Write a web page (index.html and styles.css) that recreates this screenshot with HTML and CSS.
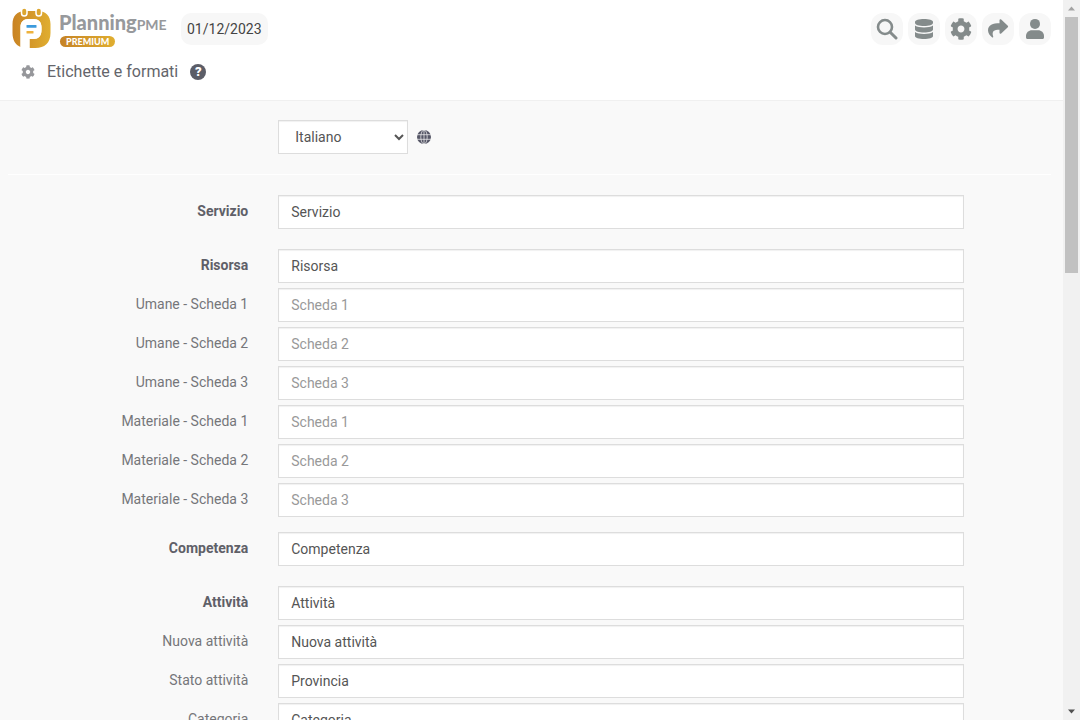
FILE: index.html
```html
<!DOCTYPE html>
<html lang="it">
<head>
<meta charset="utf-8">
<meta name="viewport" content="width=device-width, initial-scale=1">
<title>PlanningPME - Etichette e formati</title>
<link rel="stylesheet" href="styles.css">
</head>
<body>
<div class="page">
  <header class="header">
    <div class="topbar">
      <a class="logo" href="#" aria-label="PlanningPME Premium">
        <svg class="logo-mark" viewBox="0 0 38 41" aria-hidden="true">
          <defs><linearGradient id="gold" x1="0" y1="0" x2="1" y2="0"><stop offset="0" stop-color="#c98324"/><stop offset="1" stop-color="#e0ae30"/></linearGradient></defs>
          <path fill="url(#gold)" d="M12 3H26C33 3 38 8 38 16V25C38 35 32 40 23 40H17V31H21C26 31 29 28 29 22V19C29 14 26 11 21 11H16C11 11 8 14 8 19V39C3 37 0 32 0 25V16C0 8 5 3 12 3Z"/>
          <path fill="#fff" d="M8 39V19C8 14 11 11 16 11H21C26 11 29 14 29 19V22C29 28 26 31 21 31H17V40H12Z"/>
          <g fill="#dca62f" stroke="#fff" stroke-width="1.500"><rect x="9" y="0" width="5.500" height="8" rx="2.750"/><rect x="23.500" y="0" width="5.500" height="8" rx="2.750"/></g>
          <rect x="14" y="17" width="10" height="2.800" rx=".6" fill="#3d9bdc"/>
          <rect x="14" y="23" width="7" height="2.600" rx=".6" fill="#eeb23c"/>
        </svg>
        <span class="logo-text">
          <span class="logo-name">Planning<span class="logo-suffix">PME</span></span>
          <span class="logo-badge">PREMIUM</span>
        </span>
      </a>
      <button class="date" type="button">01/12/2023</button>
      <nav class="tools" aria-label="Strumenti">
        <button class="tool" type="button" aria-label="Cerca"><svg viewBox="0 0 22 22"><circle cx="9" cy="9" r="7" fill="none" stroke="currentColor" stroke-width="2.600"/><path d="M14.200 14.200L20 20" stroke="currentColor" stroke-width="3" stroke-linecap="round"/></svg></button>
        <button class="tool" type="button" aria-label="Dati"><svg viewBox="0 0 22 22" fill="currentColor"><path d="M2 4C2 2.200 6 1 11 1S20 2.200 20 4V5C20 6.700 16 8 11 8S2 6.700 2 5Z"/><path d="M2 7.600C4 9 7.500 9.500 11 9.500S18 9 20 7.600V11.500C20 13.200 16 14.500 11 14.500S2 13.200 2 11.500Z"/><path d="M2 14.100C4 15.500 7.500 16 11 16S18 15.500 20 14.100V18C20 19.800 16 21 11 21S2 19.800 2 18Z"/></svg></button>
        <button class="tool" type="button" aria-label="Impostazioni"><svg viewBox="0 0 512 512"><use href="#gear"/></svg></button>
        <button class="tool" type="button" aria-label="Condividi"><svg viewBox="0 0 22 22" fill="currentColor"><path d="M12.500 2.200C12.500 1.300 13.500 1 14.200 1.600L20.800 7.800C21.300 8.300 21.300 8.800 20.800 9.300L14.200 15.400C13.500 16 12.500 15.700 12.500 14.800V11.700C7 11.700 4.500 13 6.200 18.600C6.400 19.400 5.700 19.900 5 19.300C2.800 17.600 1 15.200 1 12.300C1 6.700 6 5.300 12.500 5.200Z"/></svg></button>
        <button class="tool" type="button" aria-label="Utente"><svg viewBox="0 0 22 22" fill="currentColor"><circle cx="11" cy="5.900" r="5"/><path d="M2 19.500V18C2 14.600 4.600 12.300 8 12.300H14C17.400 12.300 20 14.600 20 18V19.500C20 20.400 19.400 21 18.500 21H3.500C2.600 21 2 20.400 2 19.500Z"/></svg></button>
      </nav>
    </div>
    <div class="titlebar">
      <svg class="title-gear" viewBox="0 0 512 512" aria-hidden="true"><path id="gear" fill="currentColor" d="M487.400 315.700l-42.600-24.600c4.300-23.200 4.300-47 0-70.200l42.600-24.600c4.900-2.800 7.100-8.600 5.500-14-11.100-35.600-30-67.800-54.700-94.600-3.800-4.100-10-5.100-14.800-2.300L380.800 110c-17.900-15.400-38.500-27.300-60.800-35.100V25.800c0-5.600-3.900-10.500-9.400-11.700-36.700-8.200-74.300-7.800-109.200 0-5.500 1.200-9.400 6.100-9.400 11.700V75c-22.200 7.900-42.800 19.800-60.800 35.100L88.700 85.500c-4.900-2.800-11-1.900-14.800 2.300-24.700 26.700-43.600 58.900-54.700 94.600-1.700 5.400.6 11.200 5.500 14L67.300 221c-4.300 23.200-4.300 47 0 70.200l-42.600 24.600c-4.900 2.800-7.100 8.600-5.500 14 11.100 35.600 30 67.800 54.700 94.600 3.800 4.100 10 5.100 14.800 2.300l42.600-24.600c17.900 15.400 38.500 27.300 60.800 35.100v49.200c0 5.600 3.900 10.500 9.400 11.700 36.700 8.200 74.300 7.800 109.200 0 5.500-1.200 9.400-6.100 9.400-11.700v-49.200c22.200-7.900 42.800-19.800 60.800-35.100l42.600 24.600c4.900 2.800 11 1.900 14.800-2.300 24.700-26.700 43.600-58.900 54.700-94.600 1.500-5.500-.7-11.300-5.600-14.100zM256 336c-44.100 0-80-35.900-80-80s35.900-80 80-80 80 35.900 80 80-35.900 80-80 80z"/></svg>
      <h1 class="title">Etichette e formati</h1>
      <button class="help" type="button" aria-label="Aiuto">?</button>
    </div>
  </header>
  <main class="content">
    <form>
      <div class="row language">
        <div class="label"></div>
        <div class="field">
          <select class="select" aria-label="Lingua"><option>Italiano</option></select>
          <svg class="globe" viewBox="0 0 14 14" aria-hidden="true"><circle cx="7" cy="7" r="7" fill="#555666"/><g fill="none" stroke="#f9f9f9" stroke-width=".7"><ellipse cx="7" cy="7" rx="3.200" ry="7"/><path d="M7 0V14M0 4.700H14M0 9.300H14"/></g></svg>
        </div>
      </div>
      <hr class="rule">
      <div class="group">
        <div class="row"><label class="label strong" for="f1">Servizio</label><div class="field"><input class="input" id="f1" type="text" value="Servizio"></div></div>
      </div>
      <div class="group resources">
        <div class="row"><label class="label strong" for="f2">Risorsa</label><div class="field"><input class="input" id="f2" type="text" value="Risorsa"></div></div>
        <div class="row"><label class="label" for="f3">Umane - Scheda 1</label><div class="field"><input class="input" id="f3" type="text" placeholder="Scheda 1"></div></div>
        <div class="row"><label class="label" for="f4">Umane - Scheda 2</label><div class="field"><input class="input" id="f4" type="text" placeholder="Scheda 2"></div></div>
        <div class="row"><label class="label" for="f5">Umane - Scheda 3</label><div class="field"><input class="input" id="f5" type="text" placeholder="Scheda 3"></div></div>
        <div class="row"><label class="label" for="f6">Materiale - Scheda 1</label><div class="field"><input class="input" id="f6" type="text" placeholder="Scheda 1"></div></div>
        <div class="row"><label class="label" for="f7">Materiale - Scheda 2</label><div class="field"><input class="input" id="f7" type="text" placeholder="Scheda 2"></div></div>
        <div class="row"><label class="label" for="f8">Materiale - Scheda 3</label><div class="field"><input class="input" id="f8" type="text" placeholder="Scheda 3"></div></div>
      </div>
      <div class="group">
        <div class="row"><label class="label strong" for="f9">Competenza</label><div class="field"><input class="input" id="f9" type="text" value="Competenza"></div></div>
      </div>
      <div class="group">
        <div class="row"><label class="label strong" for="f10">Attività</label><div class="field"><input class="input" id="f10" type="text" value="Attività"></div></div>
        <div class="row"><label class="label" for="f11">Nuova attività</label><div class="field"><input class="input" id="f11" type="text" value="Nuova attività"></div></div>
        <div class="row"><label class="label" for="f12">Stato attività</label><div class="field"><input class="input" id="f12" type="text" value="Provincia"></div></div>
        <div class="row"><label class="label" for="f13">Categoria</label><div class="field"><input class="input" id="f13" type="text" value="Categoria"></div></div>
      </div>
    </form>
  </main>
</div>
<div class="scrollbar" aria-hidden="true">
  <svg class="arrow up" viewBox="0 0 17 17"><path d="M5 10.500L8.500 6.500L12 10.500Z"/></svg>
  <div class="track"><div class="thumb"></div></div>
  <svg class="arrow down" viewBox="0 0 17 17"><path d="M5 6.500L8.500 10.500L12 6.500Z"/></svg>
</div>
</body>
</html>
```

FILE: styles.css
```css
* { box-sizing: border-box; }

body {
  margin: 0;
  height: 100vh;
  display: flex;
  overflow: hidden;
  background: #f9f9f9;
  color: #555;
  font: 14px/20px Roboto, "Liberation Sans", sans-serif;
}

button, input, select { font: inherit; color: inherit; }
button { border: 0; padding: 0; cursor: pointer; }

.page { flex: 1; min-width: 0; overflow: hidden; }

.header {
  background: #fff;
  border-bottom: 1px solid #f0f0f0;
  padding: 8px 12px 17px;
}

.topbar { display: flex; align-items: center; height: 41px; }

.logo { width: 155px; display: flex; align-items: center; gap: 8px; text-decoration: none; }
.logo-mark { width: 39px; height: 41px; flex: none; }
.logo-text { display: flex; flex-direction: column; align-items: flex-start; }
.logo-name { font: 900 20px/23px Lato, sans-serif; color: #97999c; }
.logo-suffix { font-size: 14px; font-weight: 700; }
.logo-badge {
  margin-left: 1px;
  padding: 0 6px;
  border-radius: 6px;
  background: linear-gradient(90deg, #c58226, #e0ae30);
  color: #fff;
  font: 900 9px/11px Lato, sans-serif;
}

.date {
  margin-left: 14px;
  height: 32px;
  padding: 0 6px;
  border-radius: 10px;
  background: #f7f7f7;
  color: #444;
}

.tools { display: flex; gap: 5px; margin-left: auto; }
.tool {
  width: 32px;
  height: 32px;
  display: grid;
  place-items: center;
  border-radius: 12px;
  background: #f7f7f7;
  color: #848b8b;
}
.tool svg { width: 22px; height: 22px; display: block; }

.titlebar { display: flex; align-items: center; margin-top: 11px; padding-left: 9px; height: 23px; }
.title-gear { width: 14px; height: 14px; color: #96979b; }
.title { margin: 0 12px; font-size: 16px; font-weight: 400; line-height: 22px; color: #64656b; }
.help {
  width: 16px;
  height: 16px;
  border-radius: 50%;
  background: #5b5d67;
  color: #fff;
  font-size: 13px;
  font-weight: 900;
  line-height: 16px;
}

.content { padding: 19px 10px 0; }
.row { display: flex; margin: 0 -15px; }
.row + .row { margin-top: 5px; }
.label { width: 25%; padding: 6px 15px 0; text-align: right; color: #75767a; }
.strong { font-weight: 700; color: #5f6068; }
.field { width: 66.6667%; padding: 0 15px; display: flex; align-items: center; gap: 9px; }

.input, .select {
  height: 34px;
  border: 1px solid #ddd;
  border-radius: 0;
  background: #fff;
  box-shadow: inset 0 1px 1px rgba(0, 0, 0, .06);
}
.input { width: 100%; padding: 6px 12px; }
.input::placeholder { color: #999; opacity: 1; }
.select { width: 130px; padding: 6px 0 6px 12px; }
.globe { width: 14px; height: 14px; }

.rule { margin: 20px 2px 20px -2px; border: 0; border-top: 1px solid #fff; }
.group { margin-bottom: 20px; }
.resources { margin-bottom: 15px; }

.scrollbar { width: 17px; display: flex; flex-direction: column; background: #f1f1f1; }
.arrow { width: 17px; height: 17px; flex: none; display: block; }
.up { fill: #a3a3a3; }
.down { fill: #505050; }
.track { flex: 1; padding: 0 2px; }
.thumb { height: 37.3%; background: #c1c1c1; }
```
